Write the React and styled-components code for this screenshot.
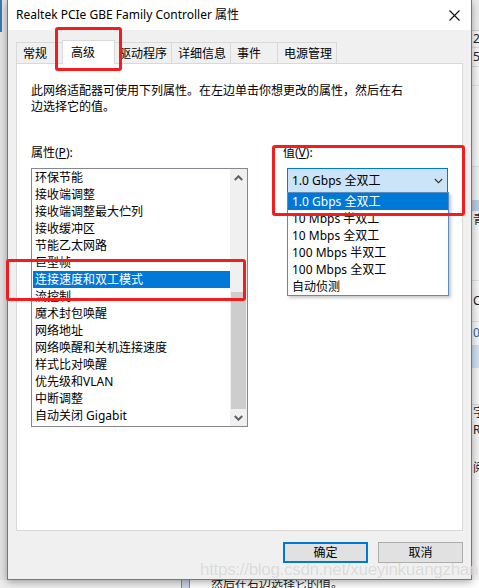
import React from 'react'
import styled, { createGlobalStyle } from 'styled-components'

const GlobalStyle = createGlobalStyle`
  html, body {
    margin: 0;
    padding: 0;
  }
  body {
    width: 479px;
    height: 588px;
    overflow: hidden;
    background: #ececec;
    font-family: "Noto Sans", "Noto Sans CJK SC", sans-serif;
    font-size: 12px;
    color: #000;
  }
`

const Desktop = styled.div`
    position: relative;
    width: 479px;
    height: 588px;
    display: grid;
    grid-template-columns: 7px 465px 7px;
    grid-template-rows: 580px 8px;
    overflow: hidden;
    background: #ececec;
`
const LeftEdge = styled.div`
    display: flex;
    flex-direction: column;
    background: #e4e4e4;
`
const TaskbarTab = styled.div`
    width: 2px;
    height: 32px;
    background: #3a78b8;
`
const RightEdge = styled.div`
    display: flex;
    flex-direction: column;
    background: #f6f6f6;
    overflow: hidden;
`
const EdgeRow = styled.div`
    height: ${props => props.$h}px;
    background: ${props => props.$bg || 'transparent'};
    border-bottom: 1px solid ${props => props.$line || 'transparent'};
    color: ${props => props.$color || '#222'};
    font-size: 12px;
    line-height: ${props => props.$h}px;
    padding-left: 1px;
    white-space: nowrap;
`

const Dialog = styled.div`
    position: relative;
    z-index: 1;
    display: flex;
    flex-direction: column;
    background: #f0f0f0;
    border: 1px solid #767676;
    border-top: none;
    box-shadow: 0 2px 8px rgba(0, 0, 0, 0.35);
`
const TitleBar = styled.div`
    height: 30px;
    display: flex;
    align-items: center;
    justify-content: space-between;
    background: #fff;
    padding-left: 8px;
`
const TitleText = styled.span`
    font-size: 12px;
    line-height: 16px;
    color: #000;
`
const CloseBtn = styled.div`
    width: 34px;
    height: 30px;
    display: flex;
    align-items: center;
    justify-content: center;
`
const Body = styled.div`
    flex: 1;
    display: flex;
    flex-direction: column;
    padding: 10px 8px 0;
`
const TabStrip = styled.div`
    height: 23px;
    display: flex;
    align-items: flex-end;
`
const Tab = styled.div`
    position: relative;
    z-index: ${props => props.$active ? 2 : 1};
    box-sizing: border-box;
    height: ${props => props.$active ? 24 : 21}px;
    min-width: ${props => props.$active ? 53 : 48}px;
    margin: 0 ${props => props.$active ? -2 : 0}px ${props => props.$active ? -1 : 0}px ${props => props.$active ? -2 : props.$first ? 0 : -1}px;
    padding: ${props => props.$active ? '3px 7px 0 8px' : '2px 4px 0 6px'};
    background: ${props => props.$active ? '#fff' : '#f0f0f0'};
    border: 1px solid #d9d9d9;
    border-bottom: none;
    font-size: 12px;
    line-height: 17px;
    white-space: nowrap;
`
const Panel = styled.div`
    box-sizing: border-box;
    height: 468px;
    background: #fff;
    border: 1px solid #d9d9d9;
    padding: 19px 14px 0;
`
const Description = styled.p`
    margin: 0;
    font-size: 12px;
    line-height: 16px;
`
const PropertyGrid = styled.div`
    display: grid;
    grid-template-columns: 252px 1fr;
    margin-top: 30px;
`
const Label = styled.div`
    font-size: 12px;
    line-height: 16px;
    margin-bottom: 7px;
`
const ListBox = styled.div`
    box-sizing: border-box;
    width: 217px;
    height: 259px;
    border: 1px solid #828790;
    display: flex;
    background: #fff;
`
const Items = styled.div`
    flex: 1;
    display: flex;
    flex-direction: column;
`
const Item = styled.div`
    height: 17px;
    line-height: 17px;
    margin-left: 1px;
    padding-left: 2px;
    font-size: 12px;
    white-space: nowrap;
    background: ${props => props.$selected ? '#0078d7' : 'transparent'};
    color: ${props => props.$selected ? '#fff' : '#000'};
`
const ScrollBar = styled.div`
    width: 17px;
    display: flex;
    flex-direction: column;
    background: #f0f0f0;
`
const ScrollArrow = styled.div`
    height: 17px;
    display: flex;
    align-items: center;
    justify-content: center;
`
const ScrollTrack = styled.div`
    flex: 1;
    display: flex;
    flex-direction: column;
    justify-content: flex-end;
`
const Thumb = styled.div`
    height: 117px;
    margin: 0 1px;
    background: #cdcdcd;
`
const ValueColumn = styled.div`
    display: flex;
    flex-direction: column;
`
const Combo = styled.div`
    position: relative;
    box-sizing: border-box;
    width: 161px;
    height: 25px;
    margin-left: 4px;
    display: flex;
    align-items: center;
    justify-content: space-between;
    padding: 0 4px 0 4px;
    background: #cce4f7;
    border: 1px solid #0078d7;
    font-size: 12px;
    line-height: 23px;
`
const DropList = styled.div`
    position: absolute;
    top: 100%;
    left: -1px;
    z-index: 3;
    box-sizing: border-box;
    width: 162px;
    background: #fff;
    border: 1px solid #5a8cc0;
    box-shadow: 2px 2px 3px rgba(0, 0, 0, 0.22);
`
const Option = styled.div`
    height: 17px;
    line-height: 17px;
    padding-left: 4px;
    font-size: 12px;
    white-space: nowrap;
    background: ${props => props.$selected ? '#0078d7' : 'transparent'};
    color: ${props => props.$selected ? '#fff' : '#000'};
`
const ButtonRow = styled.div`
    display: flex;
    justify-content: flex-end;
    gap: 10px;
    margin-top: 11px;
`
const Button = styled.button`
    box-sizing: border-box;
    width: 85px;
    height: 21px;
    padding: 0;
    background: #e1e1e1;
    border: ${props => props.$default ? '2px solid #0078d7' : '1px solid #adadad'};
    font-family: "Noto Sans", "Noto Sans CJK SC", sans-serif;
    font-size: 12px;
    line-height: 17px;
    color: #000;
`

const BottomStrip = styled.div`
    grid-column: 1 / 4;
    display: flex;
    overflow: hidden;
`
const BottomGray = styled.div`
    width: 181px;
    background: #eeeeee;
`
const BottomBar = styled.div`
    width: 7px;
    background: #c9d6e4;
    border-left: 1px solid #8a8a8a;
    border-right: 1px solid #8a8a8a;
`
const BottomPage = styled.div`
    flex: 1;
    background: #fff;
    padding-left: 21px;
    font-size: 12px;
    line-height: 16px;
    margin-top: -4px;
    color: #222;
    white-space: nowrap;
`

const Annotation = styled.div`
    position: absolute;
    z-index: 5;
    box-sizing: border-box;
    left: ${props => props.$x}px;
    top: ${props => props.$y}px;
    width: ${props => props.$w}px;
    height: ${props => props.$h}px;
    border: 3px solid #f41c1c;
    border-radius: 3px;
    pointer-events: none;
`
const Watermark = styled.div`
    position: absolute;
    z-index: 6;
    left: 200px;
    top: 561px;
    font-family: "Liberation Sans", Arial, sans-serif;
    font-size: 17px;
    line-height: 18px;
    letter-spacing: -0.3px;
    color: rgba(190, 190, 190, 0.55);
    text-shadow: 0 0 1px rgba(255, 255, 255, 0.8);
    white-space: nowrap;
    pointer-events: none;
`

const Chevron = ({ up, color = '#606060', width = 2 }) => (
    <svg width="9" height="6" viewBox="0 0 9 6">
        <polyline
            points={up ? '0.8,5 4.5,1.3 8.2,5' : '0.8,1 4.5,4.7 8.2,1'}
            fill="none"
            stroke={color}
            strokeWidth={width}
        />
    </svg>
)

const tabs = ['常规', '高级', '驱动程序', '详细信息', '事件', '电源管理']

const properties = [
    '环保节能',
    '接收端调整',
    '接收端调整最大伫列',
    '接收缓冲区',
    '节能乙太网路',
    '巨型帧',
    '连接速度和双工模式',
    '流控制',
    '魔术封包唤醒',
    '网络地址',
    '网络唤醒和关机连接速度',
    '样式比对唤醒',
    '优先级和VLAN',
    '中断调整',
    '自动关闭 Gigabit',
]

const speeds = [
    '1.0 Gbps 全双工',
    '10 Mbps 半双工',
    '10 Mbps 全双工',
    '100 Mbps 半双工',
    '100 Mbps 全双工',
    '自动侦测',
]

function App() {
    return (
        <>
            <GlobalStyle />
            <Desktop>
                <LeftEdge>
                    <TaskbarTab />
                </LeftEdge>

                <Dialog>
                    <TitleBar>
                        <TitleText>Realtek PCIe GBE Family Controller 属性</TitleText>
                        <CloseBtn>
                            <svg width="11" height="11" viewBox="0 0 11 11">
                                <path d="M0.5 0.5 L10.5 10.5 M10.5 0.5 L0.5 10.5" stroke="#111" strokeWidth="1.1" />
                            </svg>
                        </CloseBtn>
                    </TitleBar>

                    <Body>
                        <TabStrip>
                            {tabs.map((t, i) => (
                                <Tab key={t} $first={i === 0} $active={t === '高级'}>{t}</Tab>
                            ))}
                        </TabStrip>

                        <Panel>
                            <Description>
                                此网络适配器可使用下列属性。在左边单击你想更改的属性，然后在右<br />
                                边选择它的值。
                            </Description>

                            <PropertyGrid>
                                <div>
                                    <Label>属性(<u>P</u>):</Label>
                                    <ListBox>
                                        <Items>
                                            {properties.map(p => (
                                                <Item key={p} $selected={p === '连接速度和双工模式'}>{p}</Item>
                                            ))}
                                        </Items>
                                        <ScrollBar>
                                            <ScrollArrow><Chevron up /></ScrollArrow>
                                            <ScrollTrack><Thumb /></ScrollTrack>
                                            <ScrollArrow><Chevron /></ScrollArrow>
                                        </ScrollBar>
                                    </ListBox>
                                </div>

                                <ValueColumn>
                                    <Label>值(<u>V</u>):</Label>
                                    <Combo>
                                        <span>1.0 Gbps 全双工</span>
                                        <Chevron color="#333" width={1.1} />
                                        <DropList>
                                            {speeds.map((s, i) => (
                                                <Option key={s} $selected={i === 0}>{s}</Option>
                                            ))}
                                        </DropList>
                                    </Combo>
                                </ValueColumn>
                            </PropertyGrid>
                        </Panel>

                        <ButtonRow>
                            <Button $default>确定</Button>
                            <Button>取消</Button>
                        </ButtonRow>
                    </Body>
                </Dialog>

                <RightEdge>
                    <EdgeRow $h={30} $bg="#ececec" $line="#d0d0d0" />
                    <EdgeRow $h={16} $line="#dcdcdc">2</EdgeRow>
                    <EdgeRow $h={18} $line="#dcdcdc">5</EdgeRow>
                    <EdgeRow $h={18} $line="#e2e2e2" />
                    <EdgeRow $h={80} $line="#e2e2e2" />
                    <EdgeRow $h={32} $bg="#f0f0f0" />
                    <EdgeRow $h={10} $bg="#b9cde0" />
                    <EdgeRow $h={18}>青</EdgeRow>
                    <EdgeRow $h={50} $line="#e0e0e0" />
                    <EdgeRow $h={40} $line="#e0e0e0">C)</EdgeRow>
                    <EdgeRow $h={22} $color="#2f5f9a">0</EdgeRow>
                    <EdgeRow $h={22} $bg="#cfe0f0" />
                    <EdgeRow $h={36} $line="#d8d8d8" />
                    <EdgeRow $h={16}>字</EdgeRow>
                    <EdgeRow $h={16}>R</EdgeRow>
                    <EdgeRow $h={20} $bg="#f0f0f0" />
                    <EdgeRow $h={16}>阅</EdgeRow>
                </RightEdge>

                <BottomStrip>
                    <BottomGray />
                    <BottomBar />
                    <BottomPage>然后在右边选择它的值。</BottomPage>
                </BottomStrip>

                <Annotation $x={55} $y={27} $w={67} $h={44} />
                <Annotation $x={272} $y={145} $w={193} $h={71} />
                <Annotation $x={6} $y={259} $w={240} $h={42} />
                <Watermark>https://blog.csdn.net/xueyinkuangzhan</Watermark>
            </Desktop>
        </>
    )
}

export default App
